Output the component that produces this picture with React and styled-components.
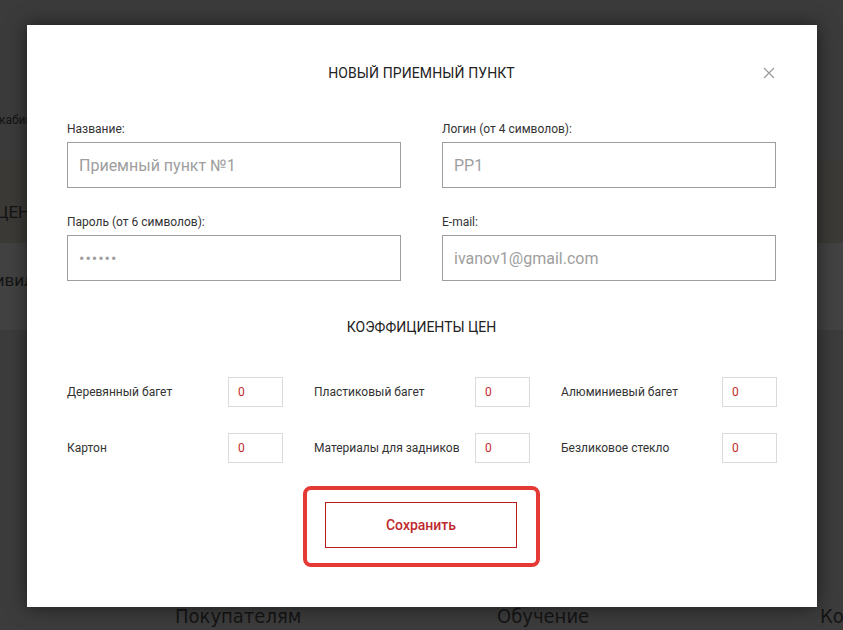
import React from 'react';
import styled, { createGlobalStyle } from 'styled-components';

const GlobalStyle = createGlobalStyle`
  html, body {
    margin: 0;
    padding: 0;
  }
  body {
    font-family: Roboto, "Noto Sans", Arial, sans-serif;
    background: #3b3b3b;
  }
  * {
    box-sizing: border-box;
  }
`;

const Page = styled.div`
  position: relative;
  width: 843px;
  height: 630px;
  overflow: hidden;
  background: #3b3b3b;
  display: flex;
  flex-direction: column;
`;

const Band = styled.div`
  height: ${p => p.h}px;
  background: ${p => p.bg};
  display: flex;
  align-items: center;
  padding-top: ${p => p.top || 0}px;
  padding-bottom: ${p => p.bottom || 0}px;
`;

// visible strip of the page text left of the modal
const Peek = styled.div`
  width: 27px;
  overflow: hidden;
  white-space: nowrap;
  color: #141414;
  font-size: ${p => p.size || 13}px;
  text-indent: ${p => p.indent || 0}px;
`;

const Filler = styled.div`
  flex: 1;
  background: #3c3c3c;
  display: flex;
  align-items: flex-end;
`;

const Nav = styled.div`
  display: grid;
  grid-template-columns: 322px 323px 1fr;
  width: 100%;
  padding: 0 0 2px 175px;
  font-family: "DejaVu Sans Condensed", Roboto, sans-serif;
  font-size: 20px;
  color: #141414;
  white-space: nowrap;
  overflow: hidden;
`;

const NavItem = styled.span`
  overflow: hidden;
`;

const Modal = styled.div`
  position: absolute;
  left: 27px;
  top: 25px;
  width: 790px;
  height: 582px;
  background: #fff;
  box-shadow: 0 0 18px rgba(0, 0, 0, 0.55);
  padding: 40px 41px 0 40px;
  display: flex;
  flex-direction: column;
`;

const Header = styled.div`
  position: relative;
  display: flex;
  justify-content: center;
  align-items: center;
  height: 14px;
  margin-top: 1px;
`;

const Title = styled.div`
  font-size: 14px;
  color: #222;
  letter-spacing: 0.1px;
`;

const Close = styled.button`
  position: absolute;
  right: 0;
  top: 0;
  width: 14px;
  height: 14px;
  padding: 0;
  border: none;
  background: none;
  display: flex;
  align-items: center;
  justify-content: center;
`;

const FormGrid = styled.div`
  display: grid;
  grid-template-columns: 334px 334px;
  column-gap: 41px;
  row-gap: 27px;
  margin-top: 42px;
`;

const Field = styled.div`
  display: flex;
  flex-direction: column;
`;

const Label = styled.label`
  font-size: 12px;
  color: #333;
  line-height: 14px;
  margin-bottom: 6px;
`;

const TextInput = styled.div`
  height: 46px;
  border: 1px solid #9e9e9e;
  display: flex;
  align-items: center;
  padding-left: 11px;
  font-size: 16px;
  color: #9e9e9e;
  letter-spacing: ${p => (p.dots ? '1px' : '0')};
`;

const Subtitle = styled.div`
  text-align: center;
  font-size: 14px;
  color: #222;
  margin-top: 38px;
  line-height: 16px;
`;

const CoefGrid = styled.div`
  display: grid;
  grid-template-columns: repeat(3, 216px);
  column-gap: 31px;
  row-gap: 26px;
  margin-top: 42px;
`;

const Coef = styled.div`
  display: flex;
  align-items: center;
  justify-content: space-between;
`;

const CoefLabel = styled.span`
  font-size: 12px;
  color: #333;
  white-space: nowrap;
`;

const CoefInput = styled.div`
  width: 55px;
  height: 30px;
  border: 1px solid #dadada;
  display: flex;
  align-items: center;
  padding-left: 9px;
  font-size: 12px;
  color: #c62828;
`;

const Actions = styled.div`
  display: flex;
  justify-content: center;
  margin-top: 23px;
`;

const Highlight = styled.div`
  padding: 12px 19px 15px 18px;
  border: 4px solid #e53935;
  border-radius: 8px;
`;

const SaveButton = styled.button`
  width: 192px;
  height: 46px;
  border: 1px solid #b71c1c;
  background: #fff;
  color: #c0282d;
  font-family: Roboto, sans-serif;
  font-size: 14px;
  font-weight: 500;
  cursor: pointer;
`;

const coefs = [
  'Деревянный багет',
  'Пластиковый багет',
  'Алюминиевый багет',
  'Картон',
  'Материалы для задников',
  'Безликовое стекло',
];

const fields = [
  { label: 'Название:', value: 'Приемный пункт №1' },
  { label: 'Логин (от 4 символов):', value: 'PP1' },
  { label: 'Пароль (от 6 символов):', value: '••••••', dots: true },
  { label: 'E-mail:', value: 'ivanov1@gmail.com' },
];

const App = () => {
  return (
    <>
      <GlobalStyle />
      <Page>
        <Band h={110} bg="#3b3b3b" />
        <Band h={20} bg="#3b3b3b">
          <Peek size={12} indent={-1}>кабинет</Peek>
        </Band>
        <Band h={30} bg="#3b3b3b" />
        <Band h={83} bg="#3b3a37" top={20}>
          <Peek size={17} indent={-4}>ЦЕНЫ</Peek>
        </Band>
        <Band h={87} bg="#424242" bottom={13}>
          <Peek size={17} indent={-27}>Привилегии</Peek>
        </Band>
        <Filler>
          <Nav>
            <NavItem>Покупателям</NavItem>
            <NavItem>Обучение</NavItem>
            <NavItem>Контакты</NavItem>
          </Nav>
        </Filler>

        <Modal>
          <Header>
            <Title>НОВЫЙ ПРИЕМНЫЙ ПУНКТ</Title>
            <Close aria-label="Закрыть">
              <svg width="12" height="12" viewBox="0 0 12 12">
                <path d="M1 1L11 11M11 1L1 11" stroke="#9a9a9a" strokeWidth="1.2" />
              </svg>
            </Close>
          </Header>

          <FormGrid>
            {fields.map(f => (
              <Field key={f.label}>
                <Label>{f.label}</Label>
                <TextInput dots={f.dots}>{f.value}</TextInput>
              </Field>
            ))}
          </FormGrid>

          <Subtitle>КОЭФФИЦИЕНТЫ ЦЕН</Subtitle>

          <CoefGrid>
            {coefs.map(c => (
              <Coef key={c}>
                <CoefLabel>{c}</CoefLabel>
                <CoefInput>0</CoefInput>
              </Coef>
            ))}
          </CoefGrid>

          <Actions>
            <Highlight>
              <SaveButton>Сохранить</SaveButton>
            </Highlight>
          </Actions>
        </Modal>
      </Page>
    </>
  );
};

export default App;
